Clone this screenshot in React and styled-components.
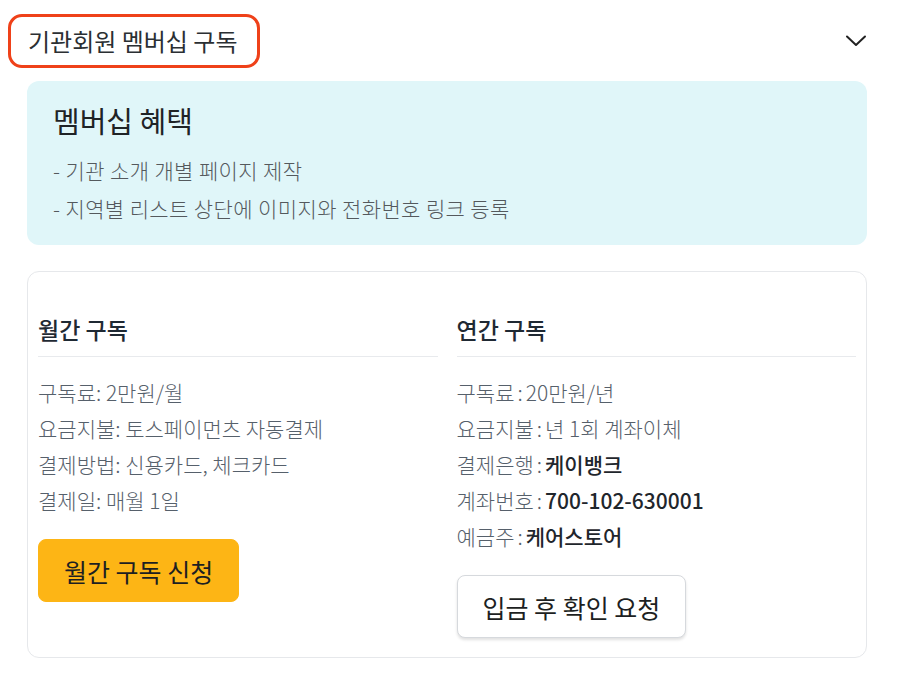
import styled, { createGlobalStyle } from 'styled-components';

const GlobalStyle = createGlobalStyle`
  body {
    margin: 0;
    background: #ffffff;
    font-family: "Noto Sans CJK KR", "Noto Sans", sans-serif;
  }
`;

const monthly = [
  { label: '구독료', value: '2만원/월' },
  { label: '요금지불', value: '토스페이먼츠 자동결제' },
  { label: '결제방법', value: '신용카드, 체크카드' },
  { label: '결제일', value: '매월 1일' },
];

const yearly = [
  { label: '구독료', value: '20만원/년' },
  { label: '요금지불', value: '년 1회 계좌이체' },
  { label: '결제은행', value: '케이뱅크', strong: true },
  { label: '계좌번호', value: '700-102-630001', strong: true },
  { label: '예금주', value: '케어스토어', strong: true },
];

function ChevronIcon() {
  return (
    <svg width="22" height="14" viewBox="0 0 22 14" fill="none">
      <polyline points="2,2.5 11,11 20,2.5" stroke="#222" strokeWidth="2" strokeLinecap="round" strokeLinejoin="round" />
    </svg>
  );
}

export default function App() {
  return (
    <>
      <GlobalStyle />
      <Page>
        <HeaderRow>
          <HeaderTitle>기관회원 멤버십 구독</HeaderTitle>
          <ChevronIcon />
        </HeaderRow>
        <Content>
          <BenefitBox>
            <BenefitTitle>멤버십 혜택</BenefitTitle>
            <BenefitList>
              <li>- 기관 소개 개별 페이지 제작</li>
              <li>- 지역별 리스트 상단에 이미지와 전화번호 링크 등록</li>
            </BenefitList>
          </BenefitBox>
          <PlanCard>
            <PlanColumn>
              <PlanTitle>월간 구독</PlanTitle>
              <DetailList>
                {monthly.map((d) => (
                  <DetailRow key={d.label}>
                    {d.label}: {d.value}
                  </DetailRow>
                ))}
              </DetailList>
              <ActionButton $primary>월간 구독 신청</ActionButton>
            </PlanColumn>
            <PlanColumn>
              <PlanTitle>연간 구독</PlanTitle>
              <DetailList>
                {yearly.map((d) => (
                  <DetailRow key={d.label}>
                    {d.label}
                    <Colon>:</Colon>
                    {d.strong ? <Strong>{d.value}</Strong> : d.value}
                  </DetailRow>
                ))}
              </DetailList>
              <ActionButton>입금 후 확인 요청</ActionButton>
            </PlanColumn>
          </PlanCard>
        </Content>
      </Page>
    </>
  );
}

const Page = styled.div`
  width: 900px;
  box-sizing: border-box;
  padding: 14px 33px 0 8px;
`;

const HeaderRow = styled.div`
  display: flex;
  justify-content: space-between;
  align-items: center;
`;

const HeaderTitle = styled.span`
  display: inline-block;
  border: 3px solid #ef4119;
  border-radius: 14px;
  padding: 9px 20px 9px 17px;
  font-size: 24px;
  line-height: 30px;
  color: #2b2f33;
`;

const Content = styled.div`
  padding-left: 19px;
  margin-top: 13px;
  display: flex;
  flex-direction: column;
  gap: 26px;
`;

const BenefitBox = styled.div`
  background: #e0f6f9;
  border-radius: 12px;
  padding: 21px 26px 18px;
`;

const BenefitTitle = styled.h2`
  margin: 0;
  font-size: 29px;
  line-height: 36px;
  font-weight: 400;
  color: #1f2326;
`;

const BenefitList = styled.ul`
  list-style: none;
  margin: 13px 0 0;
  padding: 0;
  font-size: 21px;
  line-height: 38px;
  color: #54595d;
  font-weight: 300;
  letter-spacing: 0.4px;
`;

const PlanCard = styled.div`
  display: grid;
  grid-template-columns: 1fr 1fr;
  column-gap: 19px;
  border: 1px solid #e6e8eb;
  border-radius: 12px;
  padding: 41px 10px 19px;
  align-items: start;
`;

const PlanColumn = styled.div`
  display: flex;
  flex-direction: column;
  align-items: flex-start;
`;

const PlanTitle = styled.h3`
  align-self: stretch;
  margin: 0;
  padding-bottom: 11px;
  border-bottom: 1px solid #e8eaed;
  font-size: 23px;
  line-height: 32px;
  font-weight: 500;
  color: #1f2933;
`;

const DetailList = styled.div`
  margin-top: 17px;
  display: flex;
  flex-direction: column;
`;

const DetailRow = styled.div`
  font-size: 21px;
  line-height: 36px;
  color: #56606b;
  font-weight: 300;
  white-space: nowrap;
`;

const Colon = styled.span`
  margin: 0 3px;
`;

const Strong = styled.span`
  color: #1f262c;
  font-weight: 500;
`;

const ActionButton = styled.button`
  margin-top: 21px;
  height: 63px;
  padding: 0 25px;
  border-radius: 8px;
  font-family: inherit;
  font-size: 25px;
  color: #1d1f22;
  cursor: pointer;
  background: ${(p) => (p.$primary ? '#fdb515' : '#ffffff')};
  border: ${(p) => (p.$primary ? '1px solid #fdb515' : '1px solid #d6d9dd')};
  box-shadow: ${(p) => (p.$primary ? 'none' : '0 2px 3px rgba(0, 0, 0, 0.12)')};
`;
